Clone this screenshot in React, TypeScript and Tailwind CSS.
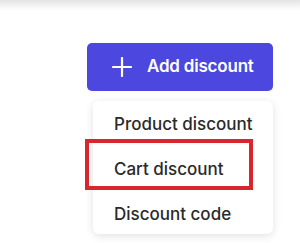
import React from "react";

export default function App() {
  return (
    <div className="w-[300px] h-[243px] bg-white overflow-hidden relative" style={{ fontFamily: "Inter, 'Noto Sans', sans-serif" }}>
      <div className="h-[10px] bg-gradient-to-b from-[#e4e4e4] to-white" />
      <div className="relative ml-[87px] mt-[33px] w-[186px]">
        <button className="w-[186px] h-[48px] rounded-[5px] bg-[#4b47df] text-white flex items-center pl-[25px] gap-[15px]">
          <svg width="20" height="20" viewBox="0 0 20 20" fill="none">
            <path d="M10 1V19M1 10H19" stroke="white" strokeWidth="2.2" strokeLinecap="round" />
          </svg>
          <span className="text-[17px] font-semibold tracking-[-0.2px]">Add discount</span>
        </button>
        <div className="absolute left-[6px] top-[58px] w-[180px] h-[133px] bg-white rounded-[6px] shadow-[0_2px_8px_rgba(0,0,0,0.12)] pt-[12px] pl-[21px] flex flex-col gap-[22px] text-[17px] text-[#2a2a2a] font-medium leading-[23px]">
          <div>Product discount</div>
          <div>Cart discount</div>
          <div>Discount code</div>
        </div>
        <div className="absolute left-[-2px] top-[96px] w-[168px] h-[51px] border-[4px] border-[#d7262e]" />
      </div>
    </div>
  );
}
